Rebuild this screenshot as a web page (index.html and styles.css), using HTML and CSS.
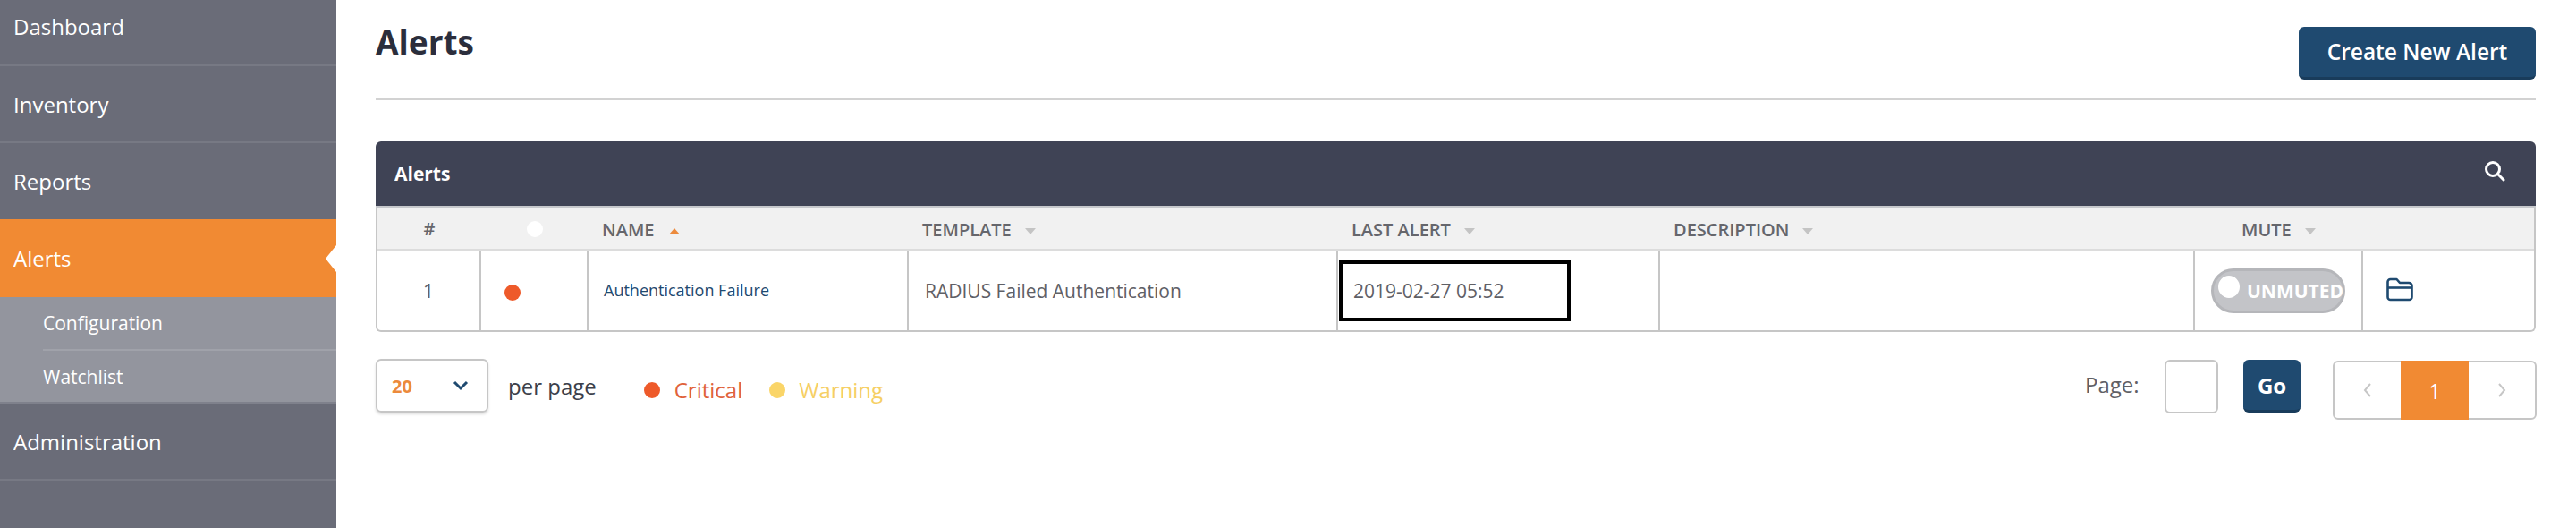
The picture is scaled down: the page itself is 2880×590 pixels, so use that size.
FILE: index.html
```html
<!DOCTYPE html>
<html>
<head>
<meta charset="utf-8">
<title>Alerts</title>
<link rel="stylesheet" href="styles.css">
</head>

<body>
<div class="sidebar">
	<a class="nav_item nav_first">Dashboard</a>
	<a class="nav_item">Inventory</a>
	<a class="nav_item nav_reports">Reports</a>
	<a class="nav_item nav_active">Alerts</a>
	<div class="subnav">
		<a class="subnav_item">Configuration</a>
		<a class="subnav_item">Watchlist</a>
	</div>
	<a class="nav_item">Administration</a>
</div>

<div class="main">
	<div class="page_head">
		<h1>Alerts</h1>
		<a class="btn btn_create">Create New Alert</a>
	</div>

	<div class="panel">
		<div class="panel_bar">
			<span class="panel_title">Alerts</span>
			<svg class="icon_search" width="24" height="24" viewBox="0 0 24 24" fill="none" stroke="#fff" stroke-width="3" stroke-linecap="round"><circle cx="10" cy="10" r="7.5"/><path d="M16 16l6 6"/></svg>
		</div>
		<div class="panel_body">
			<table>
				<colgroup>
					<col class="col_num"><col class="col_dot"><col class="col_name"><col class="col_template"><col class="col_last"><col class="col_desc"><col class="col_mute"><col>
				</colgroup>
				<thead>
					<tr>
						<th class="center">#</th>
						<th class="center"><i class="dot dot_white"></i></th>
						<th>NAME<i class="caret caret_up"></i></th>
						<th>TEMPLATE<i class="caret"></i></th>
						<th>LAST ALERT<i class="caret"></i></th>
						<th>DESCRIPTION<i class="caret"></i></th>
						<th class="th_mute">MUTE<i class="caret"></i></th>
						<th></th>
					</tr>
				</thead>
				<tbody>
					<tr>
						<td class="center">1</td>
						<td class="td_dot"><i class="dot dot_critical"></i></td>
						<td class="td_name"><a>Authentication Failure</a></td>
						<td>RADIUS Failed Authentication</td>
						<td class="td_last"><div class="focus_box">2019-02-27 05:52</div></td>
						<td></td>
						<td class="td_mute"><div class="toggle"><i class="toggle_knob"></i><span>UNMUTED</span></div></td>
						<td class="td_action">
							<svg width="30" height="27" viewBox="0 0 30 27" fill="none" stroke="#1f4a70" stroke-width="2.6" stroke-linejoin="round"><path d="M1.5 9V5a3 3 0 0 1 3-3h7l3.5 4h10a3.5 3.5 0 0 1 3.5 3.5V22a3 3 0 0 1-3 3H4.500a3 3 0 0 1-3-3z"/><path d="M1.500 11.500h27"/></svg>
						</td>
					</tr>
				</tbody>
			</table>
		</div>
	</div>

	<div class="table_foot">
		<div class="foot_left">
			<div class="per_select">
				<span>20</span>
				<svg width="18" height="12" viewBox="0 0 18 12" fill="none" stroke="#1f4a70" stroke-width="3"><path d="M2 2l7 7 7-7"/></svg>
			</div>
			<span class="per_label">per page</span>
			<div class="legend">
				<i class="dot dot_critical"></i><span class="legend_critical">Critical</span>
				<i class="dot dot_warning"></i><span class="legend_warning">Warning</span>
			</div>
		</div>
		<div class="foot_right">
			<span class="page_label">Page:</span>
			<div class="page_input"></div>
			<a class="btn btn_go">Go</a>
			<div class="pager">
				<a class="pager_item"><svg width="10" height="18" viewBox="0 0 10 18" fill="none" stroke="#c6c6c6" stroke-width="2"><path d="M8 2L2 9l6 7"/></svg></a>
				<a class="pager_item pager_active">1</a>
				<a class="pager_item"><svg width="10" height="18" viewBox="0 0 10 18" fill="none" stroke="#c6c6c6" stroke-width="2"><path d="M2 2l6 7-6 7"/></svg></a>
			</div>
		</div>
	</div>
</div>
</body>

</html>
```

FILE: styles.css
```css
*{box-sizing: border-box;}
html,body{height: 100%;}
body{margin: 0;display: flex;overflow: hidden;background: #fff;font-family: "Open Sans","Noto Sans",sans-serif;color: #5f6066;}
i{display: inline-block;}

.sidebar{flex: none;width: 376px;height: 590px;background: #6a6c78;color: #fff;}
.nav_item{display: flex;align-items: center;height: 86px;padding-left: 15px;font-size: 24px;border-bottom: 2px solid #777984;}
.nav_first{height: 74px;padding-bottom: 14px;}
.nav_reports{height: 85px;border-bottom: 0;}
.nav_active{position: relative;height: 87px;background: #f18a33;border-bottom: 0;}
.nav_active:after{content: "";position: absolute;right: 0;top: 29px;border: 15px solid transparent;border-left-width: 0;border-right: 12px solid #fff;}
.subnav{height: 119px;background: #93959e;border-bottom: 2px solid #7f818c;}
.subnav_item{display: flex;align-items: center;height: 60px;margin-left: 48px;font-size: 21px;border-bottom: 2px solid #a0a2aa;}
.subnav_item:last-child{height: 57px;border-bottom: 0;}

.main{flex: 1;min-width: 0;padding: 0 45px 0 44px;}
.page_head{display: flex;justify-content: space-between;height: 112px;padding-top: 30px;border-bottom: 2px solid #d2d2d2;}
h1{margin: -15px 0 0;font-size: 37px;font-weight: 700;line-height: 64px;color: #2b2e3c;}
.btn{display: flex;align-items: center;justify-content: center;background: #1f4a70;border-bottom: 3px solid #193c5b;border-radius: 6px;color: #fff;font-weight: 600;}
.btn_create{width: 265px;height: 59px;padding-bottom: 2px;font-size: 24.5px;}

.panel{margin-top: 46px;}
.panel_bar{display: flex;align-items: center;justify-content: space-between;height: 74px;padding: 0 34px 2px 21px;background: #3f4355;border-bottom: 2px solid #c6c8cc;border-radius: 6px 6px 0 0;color: #fff;font-size: 21px;font-weight: 700;}
.panel_title{margin-top: 2px;}
.icon_search{margin-bottom: 4px;}
.panel_body{border: 2px solid #c6c6c6;border-top: 0;border-radius: 0 0 6px 6px;}
table{width: 100%;table-layout: fixed;border-collapse: separate;border-spacing: 0;}
.col_num{width: 116px;}
.col_dot{width: 120px;}
.col_name{width: 358px;}
.col_template{width: 480px;}
.col_last{width: 360px;}
.col_desc{width: 598px;}
.col_mute{width: 188px;}
th{height: 48px;padding: 2px 0 0 15px;background: #f1f1f1;border-bottom: 2px solid #dcdcdc;text-align: left;font-size: 20px;font-weight: 600;color: #65666c;}
td{height: 89px;padding: 0 0 0 18px;border-right: 2px solid #c6c6c6;font-size: 21px;}
td:last-child{border-right: 0;}
th.center,td.center{padding: 0;text-align: center;}
.th_mute{padding-left: 52px;}
.td_dot{padding-left: 26px;}
.td_name{font-size: 18px;color: #1f4a70;padding-left: 17px;padding-bottom: 2px;}
.td_last{padding: 0 0 0 1px;}
.td_mute{padding-left: 18px;}
.td_action{padding-left: 26px;padding-top: 3px;}
.focus_box{display: flex;align-items: center;width: 259px;height: 68px;padding-left: 12px;border: 4px solid #000;}
.dot{width: 18px;height: 18px;border-radius: 50%;vertical-align: middle;}
.dot_white{background: #fff;margin-bottom: 3px;}
.dot_critical{background: #ee5a2a;}
.dot_warning{background: #fad568;}
.caret{margin-left: 15px;vertical-align: middle;border: 6px solid transparent;border-bottom: 0;border-top: 7px solid #c4c4c4;}
.caret_up{margin-left: 17px;border-top: 0;border-bottom: 7px solid #ec8a3c;}

.toggle{display: flex;align-items: center;position: relative;width: 150px;height: 50px;padding-left: 37px;background: #c3c4c8;border: 3px solid #b5b6ba;border-radius: 25px;color: #fff;font-size: 21px;font-weight: 700;white-space: nowrap;}
.toggle_knob{position: absolute;left: 5px;top: 5px;width: 24px;height: 25px;background: #fff;border-radius: 50%;}

.table_foot{display: flex;justify-content: space-between;align-items: flex-start;margin-top: 30px;}
.foot_left,.foot_right,.legend{display: flex;align-items: center;}
.per_select{display: flex;align-items: center;justify-content: space-between;width: 126px;height: 60px;padding: 0 20px 0 16px;border: 2px solid #c6c6c6;border-radius: 6px;box-shadow: 0 2px 3px #ddd;color: #ec8a3c;font-size: 20px;font-weight: 700;}
.per_label{margin-left: 22px;font-size: 24px;color: #3c3f4a;}
.legend{margin: 9px 0 0 53px;font-size: 24px;}
.legend_critical{margin: 0 30px 0 16px;color: #e0623a;}
.legend_warning{margin-left: 15px;color: #f6cf64;}
.foot_right{align-items: flex-start;width: 505px;margin: 1px -1px 0 0;}
.page_label{width: 89px;padding-top: 11px;font-size: 24px;}
.page_input{width: 60px;height: 60px;border: 2px solid #c6c6c6;border-radius: 6px;}
.btn_go{width: 64px;height: 59px;margin: 0 36px 0 28px;font-size: 24px;font-weight: 700;}
.pager{display: flex;width: 228px;height: 66px;margin-top: 1px;border: 2px solid #c6c6c6;border-radius: 6px;}
.pager_item{display: flex;flex: 1;align-items: center;justify-content: center;}
.pager_active{flex: none;width: 76px;margin: -2px 0;background: #f18a33;color: #fff;font-size: 24px;}
```
